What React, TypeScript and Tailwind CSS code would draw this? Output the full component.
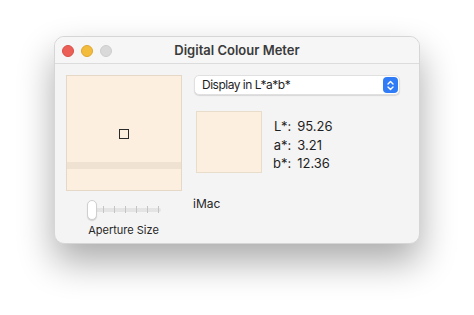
import React from "react";

export default function App() {
  const font = { fontFamily: "Inter, 'Liberation Sans', sans-serif" };
  return (
    <div className="w-[474px] h-[315px] bg-white pl-[54px] pt-[36px]" style={font}>
      <div className="w-[366px] h-[208px] rounded-[10px] bg-[#f4f4f4] border border-[#d6d6d6] shadow-[0_18px_36px_rgba(0,0,0,0.33)] overflow-hidden flex flex-col">
        {/* Title bar */}
        <div className="h-[27px] shrink-0 border-b border-[#dcdcdc] bg-[#f6f6f6] relative flex items-center justify-center">
          <div className="absolute left-[7px] top-[8px] flex gap-[7px]">
            <div className="w-[12px] h-[12px] rounded-full bg-[#ec5f57] border border-[#d85048]" />
            <div className="w-[12px] h-[12px] rounded-full bg-[#f3bc3d] border border-[#dea632]" />
            <div className="w-[12px] h-[12px] rounded-full bg-[#d9d9d9] border border-[#cdcdcd]" />
          </div>
          <span className="text-[13px] font-semibold text-[#3a3a3a] pt-[1px]">Digital Colour Meter</span>
        </div>
        {/* Content */}
        <div className="flex pl-[11px] pt-[11px] gap-[12px]">
          <div className="flex flex-col items-center w-[116px]">
            <div className="w-[116px] h-[116px] border border-[#e6d8c6] bg-[#fcefdf] flex flex-col">
              <div className="h-[86px] flex items-center justify-center pt-[30px]">
                <div className="w-[10px] h-[10px] border-[1.5px] border-[#2a2a2a]" />
              </div>
              <div className="h-[7px] bg-[#f0e2d2]" />
            </div>
            <div className="relative w-[74px] h-[20px] mt-[9px] ml-[-1px]">
              <div className="absolute left-[2px] right-[0px] top-[8px] h-[4px] rounded-full bg-[#e4e4e4]" />
              <div className="absolute left-[0px] right-[0px] top-[6px] flex justify-between pl-[16px] pr-[1px]">
                {[0, 1, 2, 3, 4, 5].map((i) => (
                  <div key={i} className="w-[1px] h-[7px] bg-[#c4c4c4]" />
                ))}
              </div>
              <div className="absolute left-[0px] top-[0px] w-[10px] h-[20px] rounded-[5px] bg-white border border-[#cfcfcf] shadow-[0_1px_1px_rgba(0,0,0,0.15)]" />
            </div>
            <div className="text-[11px] text-[#262626] mt-[2px] mr-[1px]">Aperture Size</div>
          </div>
          <div className="flex flex-col w-[206px]">
            <div className="h-[20px] w-[206px] rounded-[5px] bg-white border border-[#e0e0e0] shadow-[0_1px_1px_rgba(0,0,0,0.12)] flex items-center justify-between pl-[7px] pr-[1px]">
              <span className="text-[12px] tracking-[-0.5px] text-[#1f1f1f]">Display in L*a*b*</span>
              <div className="w-[15px] h-[16px] rounded-[4px] bg-[#2f7cf6] flex items-center justify-center">
                <svg width="9" height="11" viewBox="0 0 9 11" fill="none" stroke="white" strokeWidth="1.4" strokeLinecap="round" strokeLinejoin="round">
                  <path d="M2 4 L4.5 1.5 L7 4" />
                  <path d="M2 7 L4.5 9.5 L7 7" />
                </svg>
              </div>
            </div>
            <div className="flex mt-[16px] ml-[2px]">
              <div className="w-[66px] h-[62px] border border-[#e8dccb] bg-[#fcefdf]" />
              <div className="grid grid-cols-[auto_auto] gap-x-[6px] gap-y-[0.5px] ml-[11px] mt-[6px] text-[13px] text-[#1f1f1f] leading-[18px] h-fit">
                <span className="text-right">L*:</span>
                <span>95.26</span>
                <span className="text-right">a*:</span>
                <span>3.21</span>
                <span className="text-right">b*:</span>
                <span>12.36</span>
              </div>
            </div>
            <div className="text-[12px] text-[#262626] mt-[22px] ml-[-1px]">iMac</div>
          </div>
        </div>
      </div>
    </div>
  );
}
